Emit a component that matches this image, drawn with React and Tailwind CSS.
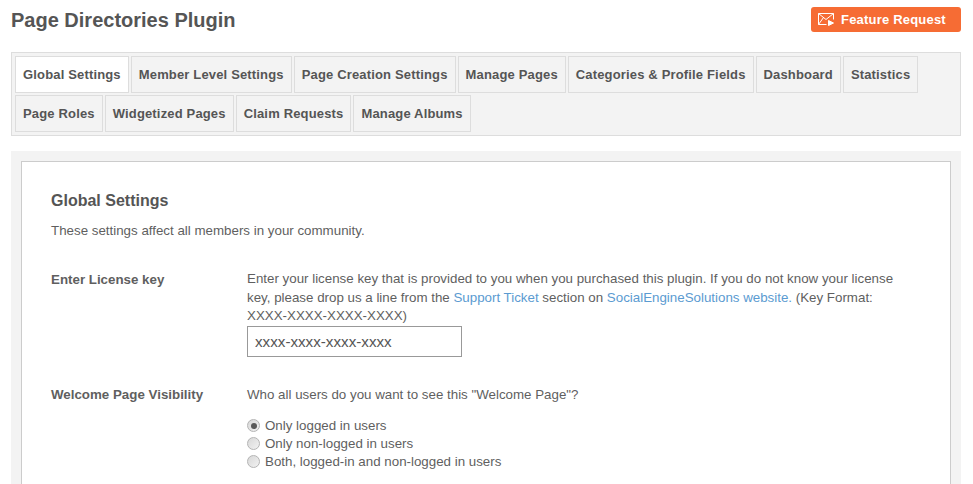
const row1 = ['Global Settings', 'Member Level Settings', 'Page Creation Settings', 'Manage Pages', 'Categories & Profile Fields', 'Dashboard', 'Statistics'];
const row2 = ['Page Roles', 'Widgetized Pages', 'Claim Requests', 'Manage Albums'];

function Tab({ label, active }) {
    return (
        <a className={`h-[37px] px-[7px] flex items-center border border-[#dddddd] text-[13px] font-bold tracking-[0.16px] whitespace-nowrap ${active ? 'bg-white text-[#555555] border-[#cccccc]' : 'bg-[#f3f3f3] text-[#555555]'}`}>
            {label}
        </a>
    );
}

function Radio({ checked, label }) {
    return (
        <label className="flex items-center h-[18px]">
            <span className="w-[13px] h-[13px] rounded-full border border-[#b4b4b4] bg-gradient-to-br from-[#d8d8d8] to-[#f2f2f2] flex items-center justify-center mr-[5px]">
                {checked && <span className="w-[6px] h-[6px] rounded-full bg-[#5a5a5a]" />}
            </span>
            {label}
        </label>
    );
}

export default function App() {
    return (
        <div className="h-[484px] overflow-hidden bg-white px-[11px] pr-[12px] font-['Liberation_Sans',Arial,sans-serif] text-[#555555]">
            <div className="flex justify-between items-start h-[52px] pt-[7px]">
                <h1 className="text-[20px] leading-[26px] font-bold">Page Directories Plugin</h1>
                <a className="w-[150px] h-[25px] rounded-[3px] bg-[#f66c34] text-white text-[13px] font-bold flex items-center pl-[7px] tracking-[0.2px]">
                    {/* envelope with small arrow at lower right */}
                    <svg width="16" height="13" viewBox="0 0 16 13" fill="none" stroke="#ffffff" strokeWidth="1" className="mr-[7px]">
                        <path d="M8.5 11.5H0.5V0.5H15.5V6.5" />
                        <path d="M0.5 0.5L8 6.5L15.5 0.5" />
                        <path d="M0.5 11.5L5.5 4.5" />
                        <path d="M10.5 7.5L15.5 10L10.5 12.5Z" fill="#ffffff" />
                    </svg>
                    Feature Request
                </a>
            </div>

            <div className="h-[84px] bg-[#f3f3f3] border border-[#dddddd] pl-[3px] pt-[3px] flex flex-col gap-[2px]">
                <div className="flex gap-[2px]">
                    {row1.map((t, i) => <Tab key={t} label={t} active={i === 0} />)}
                </div>
                <div className="flex gap-[2px]">
                    {row2.map((t) => <Tab key={t} label={t} />)}
                </div>
            </div>

            <div className="mt-[15px] bg-[#f3f3f3] px-[10px] pt-[10px]">
                <div className="bg-white border border-[#cccccc] pl-[29px] pr-[30px] pt-[29px] pb-[40px] text-[13.33px] text-[#5f5f5f]">
                    <h3 className="text-[16px] leading-[20px] font-bold text-[#555555]">Global Settings</h3>
                    <p className="mt-[10px] leading-[20px]">These settings affect all members in your community.</p>

                    <div className="flex mt-[29px]">
                        <div className="w-[196px] shrink-0 font-bold leading-[20px]">Enter License key</div>
                        <div className="w-[650px]">
                            <p className="leading-[18.5px]">
                                Enter your license key that is provided to you when you purchased this plugin. If you do not know your license key, please drop us a line from the <a className="text-[#5b9bd1]">Support Ticket</a> section on <a className="text-[#5b9bd1]">SocialEngineSolutions website.</a> (Key Format: XXXX-XXXX-XXXX-XXXX)
                            </p>
                            <input readOnly value="xxxx-xxxx-xxxx-xxxx" className="block w-[215px] h-[31px] border border-[#999999] px-[7px] text-[15.2px] text-[#555555] outline-none" />
                        </div>
                    </div>

                    <div className="flex mt-[28px]">
                        <div className="w-[196px] shrink-0 font-bold leading-[20px]">Welcome Page Visibility</div>
                        <div className="flex-1">
                            <p className="leading-[20px]">Who all users do you want to see this "Welcome Page"?</p>
                            <div className="mt-[12px]">
                                <Radio checked label="Only logged in users" />
                                <Radio label="Only non-logged in users" />
                                <Radio label="Both, logged-in and non-logged in users" />
                            </div>
                        </div>
                    </div>
                </div>
            </div>
        </div>
    );
}
